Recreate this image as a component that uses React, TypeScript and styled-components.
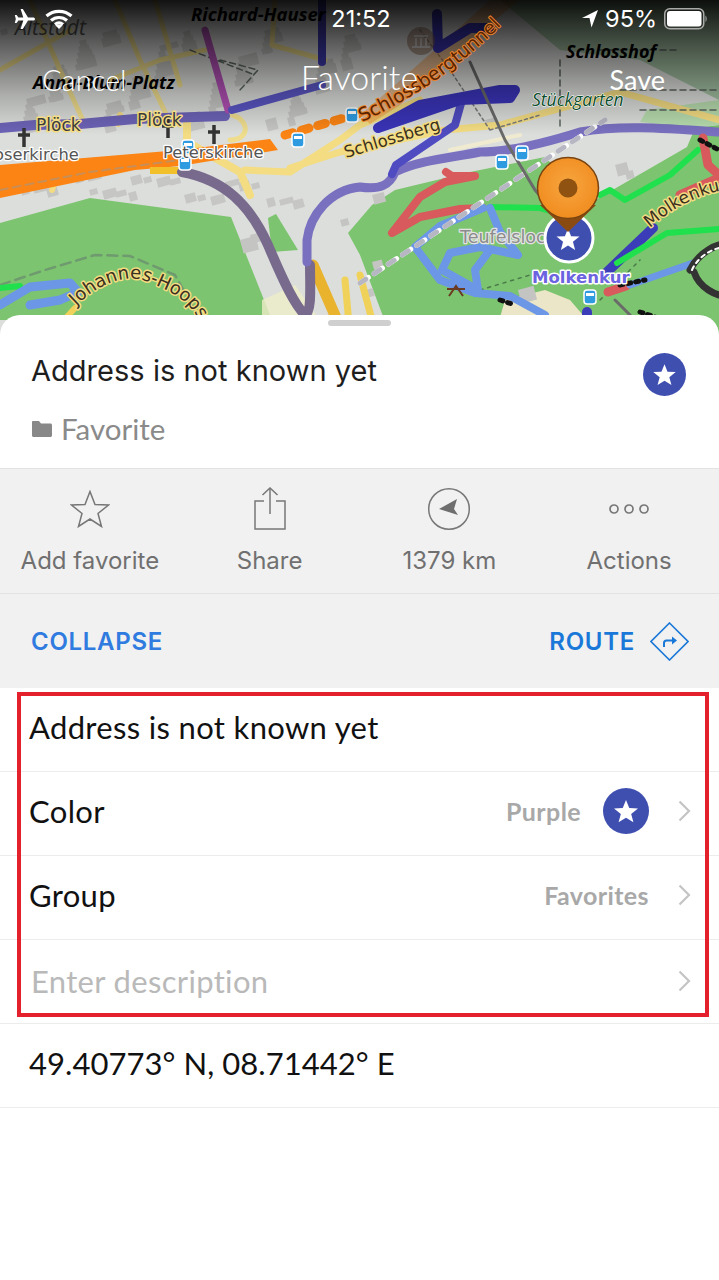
import React from "react";
import styled, { createGlobalStyle } from "styled-components";

const Global = createGlobalStyle`
  html, body { margin: 0; padding: 0; background: #fff; }
  * { box-sizing: border-box; }
  #root { width: 719px; height: 1280px; overflow: hidden; }
`;

const Page = styled.div`
  width: 719px; height: 1280px; position: relative; background: #fff;
  font-family: "Inter", "Liberation Sans", sans-serif; overflow: hidden;
`;
const MapArea = styled.header`
  position: relative; height: 335px; overflow: hidden; color: #fff;
`;
const MapCanvas = styled.svg`
  position: absolute; inset: 0; width: 719px; height: 335px; display: block;
`;
const StatusBar = styled.div`
  position: relative; height: 38px; display: grid; grid-template-columns: 1fr auto 1fr; align-items: center;
  padding: 0 11px 0 14px; font-size: 23.500px; line-height: 38px;
`;
const StatusLeft = styled.div`display: flex; align-items: center; gap: 9px;`;
const StatusRight = styled.div`display: flex; align-items: center; justify-content: flex-end; gap: 7px;`;
const NavBar = styled.nav`
  position: relative; display: grid; grid-template-columns: 1fr auto 1fr; align-items: center;
  padding: 22px 42px 0 42px; font-family: "Lato", sans-serif; font-size: 29px; line-height: 40px; font-weight: 300;
`;
const NavTitle = styled.span`font-size: 34px; font-weight: 300; margin-top: -7px;`;
const NavAction = styled.span`font-size: 27px; font-weight: 400; justify-self: end; margin-right: 12px;`;
const Sheet = styled.main`
  position: relative; margin-top: -20px; background: #fff; border-radius: 20px 20px 0 0;
`;
const Handle = styled.div`
  position: absolute; top: 5px; left: 328px; width: 63px; height: 6px; border-radius: 3px; background: #cfcfcf;
`;
const Summary = styled.section`
  height: 154px; padding: 36px 33px 0 31px; border-bottom: 1px solid #e2e2e2;
  display: grid; grid-template-columns: 1fr auto; row-gap: 15px; align-content: start;
`;
const Title = styled.div`font-size: 29px; line-height: 40px; color: #1e1e1e; letter-spacing: .03px;`;
const BadgeSlot = styled.div`padding-top: 2px;`;
const GroupLine = styled.div`
  grid-column: 1 / -1; display: flex; align-items: center; gap: 9px; color: #8a8a8a; padding-left: 1px;
  font-family: "Lato", sans-serif; font-size: 29.500px; line-height: 36px; font-weight: 400;
`;
const Band = styled.section`
  background: #f1f1f1;
`;
const Actions = styled.div`
  height: 125px; display: grid; grid-template-columns: repeat(4, 1fr); border-bottom: 1px solid #e2e2e2;
`;
const ActionItem = styled.div`
  display: flex; flex-direction: column; align-items: center; color: #707070; font-size: 24px; line-height: 30px;
`;
const ActionIcon = styled.div`
  height: 77px; padding-top: 3px; display: flex; align-items: center; justify-content: center;
`;
const Buttons = styled.div`
  height: 94px; display: flex; justify-content: space-between; align-items: center; padding: 0 30px 0 31px;
  font-size: 24px; font-weight: 600;
`;
const TextButton = styled.span<{ $color: string }>`
  color: ${p => p.$color}; display: flex; align-items: center; gap: 15px; letter-spacing: .7px;
`;
const Row = styled.div`
  height: 84px; display: flex; align-items: center; padding: 0 28px 5px 29px; border-bottom: 1px solid #ececec;
`;
const RowLabel = styled.span<{ $muted?: boolean; $tight?: boolean }>`
  flex: 1; font-family: "Lato", sans-serif; font-size: 31px;
  letter-spacing: ${p => (p.$tight ? ".05px" : ".33px")};
  color: ${p => (p.$muted ? "#b9b9b9" : "#111")};
  ${p => (p.$muted ? "padding-left: 2px; margin-top: 3px;" : "")}
`;
const RowValue = styled.span`
  font-family: "Lato", sans-serif; font-weight: 700; font-size: 25px; color: #a8a8a8; letter-spacing: .4px;
`;
const Chevron = styled.svg<{ $raise?: boolean }>`
  margin-left: 29px; display: block; ${p => (p.$raise ? "margin-top: 3px;" : "")}
`;
const SwatchSlot = styled.div`margin-left: 22px;`;
const Highlight = styled.div`
  position: absolute; left: 17px; top: 692px; width: 692px; height: 325px; border: 4px solid #e3202c; pointer-events: none;
`;

const STAR = "M0-10 2.7-3.3 10-3 4.3 1.6 6.2 8.6 0 4.7-6.2 8.6-4.3 1.6-10-3-2.7-3.3Z";

const Line = ({ d, c, w, dash }: { d: string; c: string; w: number; dash?: string }) => (
  <path d={d} stroke={c} strokeWidth={w} strokeDasharray={dash} fill="none" strokeLinecap="round" strokeLinejoin="round" />
);

const labelBase = { paintOrder: "stroke" as const, strokeLinejoin: "round" as const };

const blocks: number[][] = [];
for (let i = 0; i < 70; i++) {
  const x = (i * 53) % 345;
  const y = 30 + ((i * 37) % 95);
  blocks.push([x, y, 7 + (i % 4) * 4, 6 + (i % 3) * 3]);
}
for (let i = 0; i < 26; i++) {
  blocks.push([(i * 41) % 300 + 5, 172 + ((i * 17) % 30), 8 + (i % 3) * 3, 6 + (i % 2) * 3]);
}

const MapDrawing = () => (
  <MapCanvas viewBox="0 0 719 335">
    <defs>
      <linearGradient id="shade" x1="0" y1="0" x2="0" y2="1">
        <stop offset="0" stopColor="#000" stopOpacity=".92" />
        <stop offset=".3" stopColor="#000" stopOpacity=".6" />
        <stop offset=".7" stopColor="#000" stopOpacity=".22" />
        <stop offset="1" stopColor="#000" stopOpacity="0" />
      </linearGradient>
      <radialGradient id="pin" cx=".5" cy=".45" r=".6">
        <stop offset="0" stopColor="#f7a640" />
        <stop offset="1" stopColor="#f08a1c" />
      </radialGradient>
      <path id="johannes" d="M76 306C100 282 130 272 150 283 168 290 190 300 200 322" />
      <path id="tunnel" d="M362 122C410 100 465 65 512 14" />
      <path id="schlossberg" d="M346 158 445 128" />
      <path id="molken" d="M650 228C670 210 695 195 725 190" />
    </defs>
    <rect width="719" height="335" fill="#dcdedb" />
    {/* parks */}
    <path d="M0 223 90 198 231 217 272 320H0Z" fill="#7cc46f" />
    <path d="M268 218 276 214 298 250 272 252Z" fill="#7cc46f" />
    <path d="M348 233 372 205 395 190 470 172 545 157 590 203 687 147 695 128 719 125V335H390L360 255Z" fill="#7cc46f" />
    <path d="M647 110 719 100V125L695 128 640 122Z" fill="#b7dcae" />
    <path d="M500 0 719 0V100L640 60 560 50Z" fill="#8fb48e" opacity=".75" />
    <path d="M505 300 545 290 570 300 600 335H495Z" fill="#ece6c8" />
    <path d="M262 300 295 285 330 335H262Z" fill="#eeecc8" opacity=".8" />
    {/* buildings */}
    {blocks.map(([x, y, w, h], i) => (
      <rect key={i} x={x} y={y} width={w} height={h} fill="#c6c6c4" transform={`rotate(-15 ${x} ${y})`} />
    ))}
    {[[240,240,16,14],[250,235,9,9],[340,220,8,7],[615,165,12,12],[625,172,8,8],[372,195,12,10],[518,290,16,14],[485,120,12,10],[372,262,10,8],[365,290,8,8]].map(([x, y, w, h], i) => (
      <rect key={i} x={x} y={y} width={w} height={h} fill="#c4c4c2" transform={`rotate(-15 ${x} ${y})`} />
    ))}
    {/* yellow streets */}
    <Line d="M30 0 60 70 85 125M115 0 140 60 168 118M70 30 0 70M205 50 160 60 110 80M230 140C250 140 250 120 232 115M275 0 272 45 325 60M155 0 180 85" c="#efdd8d" w={5} />
    <Line d="M245 170 290 172 340 140 360 125 420 100M290 168 340 152 445 130 500 125 620 92 719 120" c="#f3dc82" w={7} />
    <Line d="M187 120V142L240 172 250 195" c="#f3dc82" w={8} />
    <Line d="M450 150 520 135M0 180 30 178" c="#f0ead0" w={4} />
    <Line d="M120 115 118 124M60 168 52 190" c="#f3dc82" w={6} />
    <Line d="M345 280 350 335M360 275 372 320" c="#f0d25a" w={7} />
    <Line d="M313 265 337 320" c="#e9b32e" w={11} />
    <Line d="M55 330 75 308" c="#f0d25a" w={6} />
    {/* footpaths */}
    <Line d="M0 285 45 270 95 255 130 256 175 275 200 320" c="#6f9a6f" w={2.500} dash="10 6" />
    <Line d="M220 60 258 70 240 90M190 50 255 75M560 60V130M600 50H680M620 90H719M640 110H719" c="#5c6660" w={1.500} dash="6 4" />
    <Line d="M420 30 450 70 490 130M490 130 540 115" c="#7a7a7a" w={1.500} dash="3 3" />
    <Line d="M600 300 640 260M480 290 530 275" c="#4a7a4a" w={1.500} dash="3 5" />
    {/* orange main road */}
    <path d="M0 165 180 150 270 139 278 150 180 166 135 170 0 198Z" fill="#fb8414" />
    <Line d="M0 190 90 172 180 160" c="#c88e58" w={2} dash="8 5" />
    <path d="M150 167H180L178 174H150Z" fill="#f1c02a" />
    <Line d="M285 135 365 112" c="#fb8414" w={9} dash="8 9" />
    <path d="M360 115 395 85 440 45 490 0 519 0 460 50 400 105 370 124Z" fill="#f08a30" opacity=".45" />
    {/* routes */}
    <Line d="M0 128 35 125 80 124 135 119 225 116" c="#6c63b6" w={10} />
    <Line d="M205 30 228 110" c="#b04fb3" w={7} />
    <Line d="M232 110 322 85" c="#5a56c4" w={8} />
    <Line d="M322 0V62" c="#3f3bb0" w={8} />
    <Line d="M182 172C225 180 250 205 268 245 285 285 295 305 305 315 312 312 310 285 310 265" c="#786a8c" w={10} />
    <Line d="M307 262V240C310 215 330 190 360 187 380 190 390 185 395 172 420 160 450 158 480 152 510 152 545 143 580 132 620 125 660 128 719 132" c="#7970c0" w={9} />
    <Line d="M462 100 455 125 396 165 392 174" c="#4f4cc2" w={8} />
    <Line d="M437 14 438 48 470 28 490 28M378 128 420 105 500 90 515 90 510 98 460 100 378 128" c="#3a34b8" w={10} />
    <Line d="M607 272 653 228" c="#3b3db8" w={10} />
    <Line d="M587 312V335" c="#3b3db8" w={10} />
    {/* green */}
    <Line d="M490 207 540 208 555 212M600 195 610 190 625 200 670 175 698 150M617 263 667 233 719 229M0 288 20 286" c="#21e04d" w={6} />
    {/* red */}
    <Line d="M446 172 452 176 475 176 445 182 420 197 392 233 420 217 460 209 483 208" c="#d85a5c" w={8} />
    <Line d="M703 138 708 165 719 175M680 195 719 178M608 292 626 286" c="#d85a5c" w={9} />
    {/* light blue */}
    <Line d="M483 208 440 226 415 247 440 280 475 293 510 296 545 315M490 208 500 232 518 255 480 247 450 253 442 270 478 290 475 270 490 250" c="#6c97e6" w={8} />
    <Line d="M0 305 30 287 70 283 78 292 60 300 30 305" c="#6c97e6" w={9} />
    <Line d="M630 285 693 263" c="#6c97e6" w={7} />
    <Line d="M690 270C700 250 719 245 719 245M694 272C700 290 719 295 719 295" c="#333" w={7} />
    <Line d="M692 270C700 252 719 248 719 248" c="#fff" w={2} dash="4 4" />
    <Line d="M620 285 645 280M500 300 515 305M640 312 670 322" c="#111" w={5} dash="3 5" />
    <Line d="M700 140 719 150" c="#111" w={5} dash="3 5" />
    {/* railway */}
    <Line d="M360 283 605 120" c="#fff" w={5} dash="10 7" />
    <Line d="M360 283 605 120" c="#b7b7c4" w={5} dash="7 10" />
    <Line d="M470 62 505 140 535 190 570 230M615 300 640 325" c="#6a6a6a" w={3} />
    {/* bus stops and crosses */}
    {[[188,147],[185,163],[298,140],[352,115],[502,162],[522,153],[590,297]].map(([x, y], i) => (
      <g key={i} transform={`translate(${x} ${y})`}>
        <rect x="-6" y="-7" width="12" height="14" rx="3" fill="#2e9be0" stroke="#fff" strokeWidth="1.500" />
        <rect x="-4" y="-4" width="8" height="3" fill="#fff" />
      </g>
    ))}
    {[[24,135],[214,132],[168,126]].map(([x, y], i) => (
      <path key={i} d={`M${x} ${y - 7}V${y + 12}M${x - 6} ${y}H${x + 6}`} stroke="#333" strokeWidth="3.500" fill="none" />
    ))}
    <circle cx="421" cy="41" r="14" fill="#8a6550" opacity=".55" />
    <path d="M412 47H430M414 36H428M416 38V46M421 38V46M426 38V46" stroke="#ddd" strokeWidth="1.400" />
    <path d="M447 289H465M449 296 456 286 463 296" stroke="#6a3a22" strokeWidth="2" fill="none" />
    {/* shade */}
    <rect width="719" height="135" fill="url(#shade)" />
    {/* labels */}
    <g fontFamily="Open Sans, sans-serif">
      <text x="15" y="35" fontSize="21" fontStyle="italic" fill="#111" opacity=".8">Altstadt</text>
      <text x="191" y="21" fontSize="18.500" fontWeight="700" fontStyle="italic" fill="#000">Richard-Hauser</text>
      <text x="33" y="89" fontSize="18" fontWeight="700" fontStyle="italic" fill="#000">Anna-Blum-Platz</text>
      <text x="566" y="58" fontSize="18" fontWeight="700" fontStyle="italic" fill="#000">Schlosshof</text>
      <text x="532" y="106" fontSize="17.500" fontStyle="italic" fill="#0b4d2b" stroke="#fff" strokeWidth="1" style={labelBase}>Stückgarten</text>
      <g fontFamily="DejaVu Sans, sans-serif" fontSize="17" fill="#3c3c3c" stroke="#f3dc82" strokeWidth="3" style={labelBase}>
        <text x="36" y="131">Plöck</text>
        <text x="137" y="126">Plöck</text>
      </g>
      <g fontFamily="DejaVu Sans, sans-serif" fontSize="16.300" fill="#555" stroke="#fff" strokeWidth="2.500" style={labelBase}>
        <text x="-6" y="160">oserkirche</text>
        <text x="163" y="158">Peterskirche</text>
        <text x="460" y="243" fontSize="17.500" fill="#8c8c8c" stroke="#e4e4e4">Teufelsloch</text>
      </g>
      <text x="532" y="283" fontFamily="DejaVu Sans, sans-serif" fontSize="16.500" fontWeight="700" fill="#6b63e0" stroke="#fff" strokeWidth="3" style={labelBase}>Molkenkur</text>
      <g fontFamily="DejaVu Sans, sans-serif" fill="#3b3020" stroke="#f3dc82" strokeWidth="3" style={labelBase}>
        <text fontSize="18"><textPath href="#johannes">Johannes-Hoops</textPath></text>
        <text fontSize="18.500" fill="#5a2400" stroke="#e8812c" strokeWidth="2"><textPath href="#tunnel">Schlossbergtunnel</textPath></text>
        <text fontSize="16.500"><textPath href="#schlossberg">Schlossberg</textPath></text>
        <text fontSize="17"><textPath href="#molken">Molkenkur</textPath></text>
      </g>
    </g>
    {/* favorite marker */}
    <circle cx="569" cy="238" r="24" fill="#3f4fb0" stroke="#fff" strokeWidth="3" />
    <path d={STAR} transform="translate(568 240) scale(1.150)" fill="#fff" />
    <path d="M540 205 568 232 596 205Z" fill="#8a4b12" />
    <circle cx="568" cy="188" r="30.500" fill="url(#pin)" stroke="#7a4410" strokeWidth="1.500" />
    <circle cx="568" cy="188" r="9.500" fill="#8f5210" />
  </MapCanvas>
);

const Plane = () => (
  <svg width="22" height="20" viewBox="0 0 22 20"><path d="M21 10c0-1-1-1.600-2-1.600h-5L8.800 0H6.600l2.700 8.400H4.400L2.600 6H.8l1 4-1 4h1.800l1.800-2.400h4.900L6.600 20h2.200l5.200-8.400h5c1 0 2-.6 2-1.600Z" fill="#fff" /></svg>
);
const Wifi = () => (
  <svg width="28" height="20" viewBox="0 0 28 20" fill="none" stroke="#fff" strokeWidth="3.200" strokeLinecap="butt">
    <path d="M1.500 7C8.500.7 19.500.7 26.500 7" /><path d="M6 11.500c4.600-4 11.400-4 16 0" /><path d="M10 15.500c2.400-2 5.600-2 8 0" /><path d="M14 20 10.500 16.500c2-1.500 5-1.500 7 0Z" fill="#fff" stroke="none" />
  </svg>
);
const Arrow = () => (
  <svg width="16" height="18" viewBox="0 0 16 18"><path d="M16 0 0 8h7.500l2 9.500Z" fill="#fff" /></svg>
);
const Battery = () => (
  <svg width="44" height="22" viewBox="0 0 44 22">
    <rect x=".75" y=".75" width="39" height="20" rx="5" fill="none" stroke="#aaa" strokeWidth="1.500" />
    <rect x="3" y="3" width="34.500" height="15.500" rx="3" fill="#fff" />
    <path d="M41.500 7.500c1.500.5 1.500 6 0 6.500Z" fill="#aaa" />
  </svg>
);
const Folder = () => (
  <svg width="20" height="16" viewBox="0 0 20 16"><path d="M1 0h6l2 2.500h9.500c.8 0 1.500.7 1.500 1.500v10.500c0 .8-.7 1.500-1.500 1.500H1.500C.7 16 0 15.300 0 14.500V1c0-.6.400-1 1-1Z" fill="#888" /></svg>
);
const FavBadge = ({ size }: { size: number }) => (
  <svg width={size} height={size} viewBox="0 0 46 46" style={{ display: "block" }}>
    <circle cx="23" cy="23" r="23" fill="#3f4fb0" />
    <path d={STAR} transform="translate(23 24) scale(1.200)" fill="#fff" />
  </svg>
);
const StarOutline = () => (
  <svg width="40" height="38" viewBox="0 0 40 38"><path d="M20 1.500 25 14.500 38.500 15 28 23.500 31.500 36.500 20 29 8.500 36.500 12 23.500 1.500 15 15 14.500Z" fill="none" stroke="#777" strokeWidth="1.500" /></svg>
);
const ShareIcon = () => (
  <svg width="32" height="44" viewBox="0 0 32 44" fill="none" stroke="#777" strokeWidth="1.500">
    <path d="M10 14H1v28h30V14h-9" /><path d="M16 1v26" /><path d="M8.500 8 16 1l7.500 7" />
  </svg>
);
const CompassIcon = () => (
  <svg width="44" height="44" viewBox="0 0 44 44">
    <circle cx="22" cy="22" r="20.300" fill="none" stroke="#777" strokeWidth="1.500" />
    <path d="M12 22 30 12 27 22 31 28Z" fill="#6e6e6e" />
  </svg>
);
const DotsIcon = () => (
  <svg width="42" height="12" viewBox="0 0 42 12" fill="none" stroke="#777" strokeWidth="1.700">
    <circle cx="6" cy="6" r="4" /><circle cx="21" cy="6" r="4" /><circle cx="36" cy="6" r="4" />
  </svg>
);
const RouteIcon = () => (
  <svg width="39" height="39" viewBox="0 0 39 39" fill="none" stroke="#1a78d8">
    <path d="M19.500 1 38 19.500 19.500 38 1 19.500Z" strokeWidth="1.600" />
    <path d="M14 25v-4c0-1.500 1-2.500 2.500-2.500H25" strokeWidth="2" /><path d="M22 14.500l5 4-5 4Z" fill="#1a78d8" stroke="none" />
  </svg>
);
const Chev = ({ raise }: { raise?: boolean }) => (
  <Chevron $raise={raise} width="13" height="22" viewBox="0 0 13 22"><path d="M1.500 1.500 11 11l-9.500 9.500" fill="none" stroke="#c4c4c4" strokeWidth="2.200" /></Chevron>
);

const actions = [
  { label: "Add favorite", icon: <StarOutline /> },
  { label: "Share", icon: <ShareIcon /> },
  { label: "1379 km", icon: <CompassIcon /> },
  { label: "Actions", icon: <DotsIcon /> },
];

export default function App() {
  return (
    <Page>
      <Global />
      <MapArea>
        <MapDrawing />
        <StatusBar>
          <StatusLeft><Plane /><Wifi /></StatusLeft>
          <span>21:52</span>
          <StatusRight><Arrow /><span>95%</span><Battery /></StatusRight>
        </StatusBar>
        <NavBar>
          <span>Cancel</span>
          <NavTitle>Favorite</NavTitle>
          <NavAction>Save</NavAction>
        </NavBar>
      </MapArea>
      <Sheet>
        <Handle />
        <Summary>
          <Title>Address is not known yet</Title>
          <BadgeSlot><FavBadge size={43} /></BadgeSlot>
          <GroupLine><Folder />Favorite</GroupLine>
        </Summary>
        <Band>
          <Actions>
            {actions.map(a => (
              <ActionItem key={a.label}>
                <ActionIcon>{a.icon}</ActionIcon>
                <span>{a.label}</span>
              </ActionItem>
            ))}
          </Actions>
          <Buttons>
            <TextButton $color="#2f7be0">COLLAPSE</TextButton>
            <TextButton $color="#1a78d8">ROUTE<RouteIcon /></TextButton>
          </Buttons>
        </Band>
        <Row><RowLabel>Address is not known yet</RowLabel></Row>
        <Row>
          <RowLabel>Color</RowLabel>
          <RowValue>Purple</RowValue>
          <SwatchSlot><FavBadge size={46} /></SwatchSlot>
          <Chev />
        </Row>
        <Row><RowLabel>Group</RowLabel><RowValue>Favorites</RowValue><Chev /></Row>
        <Row><RowLabel $muted>Enter description</RowLabel><Chev raise /></Row>
        <Row><RowLabel $tight>49.40773° N, 08.71442° E</RowLabel></Row>
      </Sheet>
      <Highlight />
    </Page>
  );
}
